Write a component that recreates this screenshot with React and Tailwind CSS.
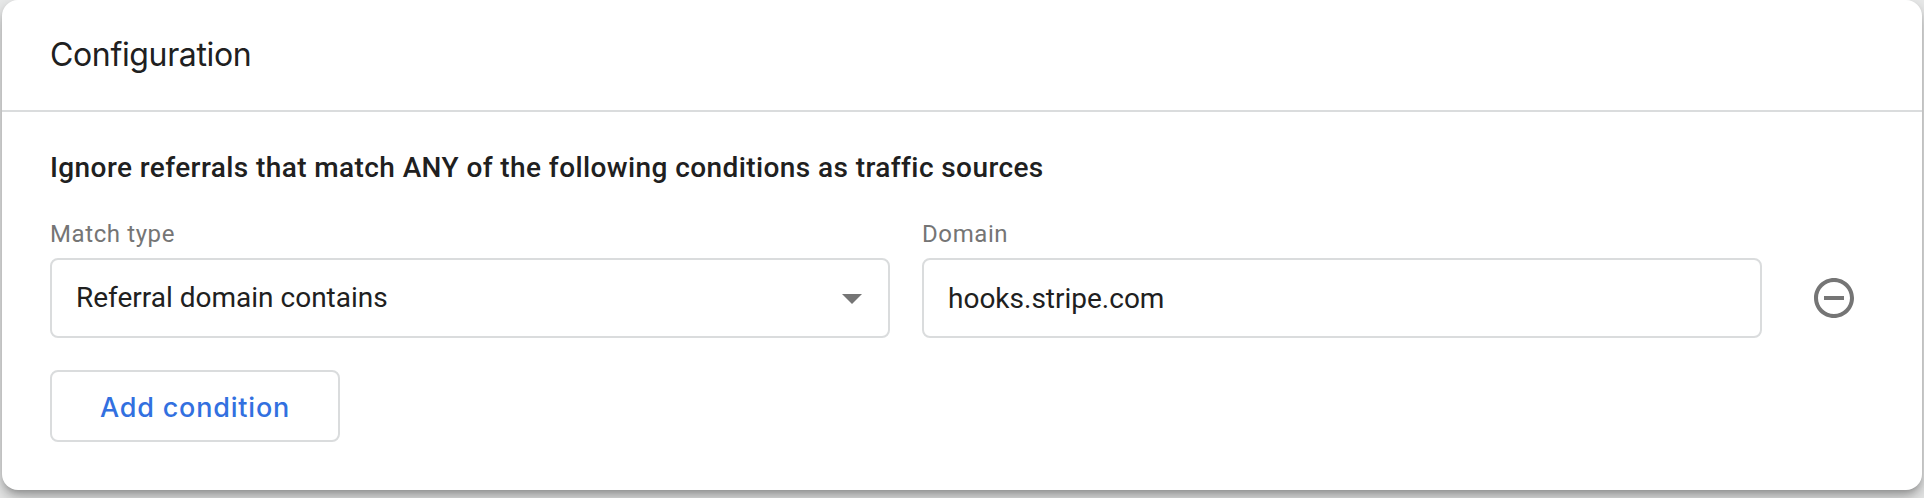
import React, { useState } from "react";

const App = () => {
  const [domain, setDomain] = useState("hooks.stripe.com");

  return (
    <div className="h-[498px] bg-[#e8e9e9] px-0.5 overflow-hidden font-['Roboto',sans-serif] text-[#202020]">
      <div className="h-[490px] bg-white rounded-2xl shadow-[0_4px_6px_-2px_rgba(0,0,0,0.2),0_8px_16px_rgba(0,0,0,0.28)]">
        <div className="h-28 flex items-center pl-12 border-b-2 border-[#dadcdd]">
          <h1 className="font-['Inter',sans-serif] text-[32px] leading-10 font-normal tracking-[-0.35px]">
            Configuration
          </h1>
        </div>
        <div className="px-12 pt-9">
          <h2 className="text-[28px] leading-10 font-medium tracking-[0.41px]">
            Ignore referrals that match ANY of the following conditions as
            traffic sources
          </h2>
          <div className="flex items-end mt-7">
            <div className="w-[840px]">
              <label className="block text-2xl leading-9 text-[#757575] tracking-[0.6px]">
                Match type
              </label>
              <button className="mt-1.5 w-full h-20 flex items-center justify-between border-2 border-[#dadcdd] rounded-lg pl-6 pr-3 text-[28px]">
                <span>Referral domain contains</span>
                <svg viewBox="0 0 24 24" className="size-12" fill="#757575">
                  <path d="M7 10l5 5 5-5z" />
                </svg>
              </button>
            </div>
            <div className="w-[840px] ml-8">
              <label className="block text-2xl leading-9 text-[#757575] tracking-[0.6px]">
                Domain
              </label>
              <input
                value={domain}
                onChange={(e) => setDomain(e.target.value)}
                className="block mt-1.5 w-full h-20 border-2 border-[#dadcdd] rounded-lg px-6 text-[28px]"
              />
            </div>
            <button className="ml-12 mb-4">
              <svg viewBox="0 0 24 24" className="size-12" fill="#757575">
                <path d="M7 11v2h10v-2H7zm5-9C6.48 2 2 6.48 2 12s4.48 10 10 10 10-4.48 10-10S17.52 2 12 2zm0 18c-4.41 0-8-3.59-8-8s3.59-8 8-8 8 3.59 8 8-3.59 8-8 8z" />
              </svg>
            </button>
          </div>
          <button className="mt-8 w-[290px] h-[72px] pt-1 border-2 border-[#dadcdd] rounded-lg font-['Inter',sans-serif] text-[27px] font-medium tracking-[0.8px] text-[#3270e0]">
            Add condition
          </button>
        </div>
      </div>
    </div>
  );
};

export default App;
